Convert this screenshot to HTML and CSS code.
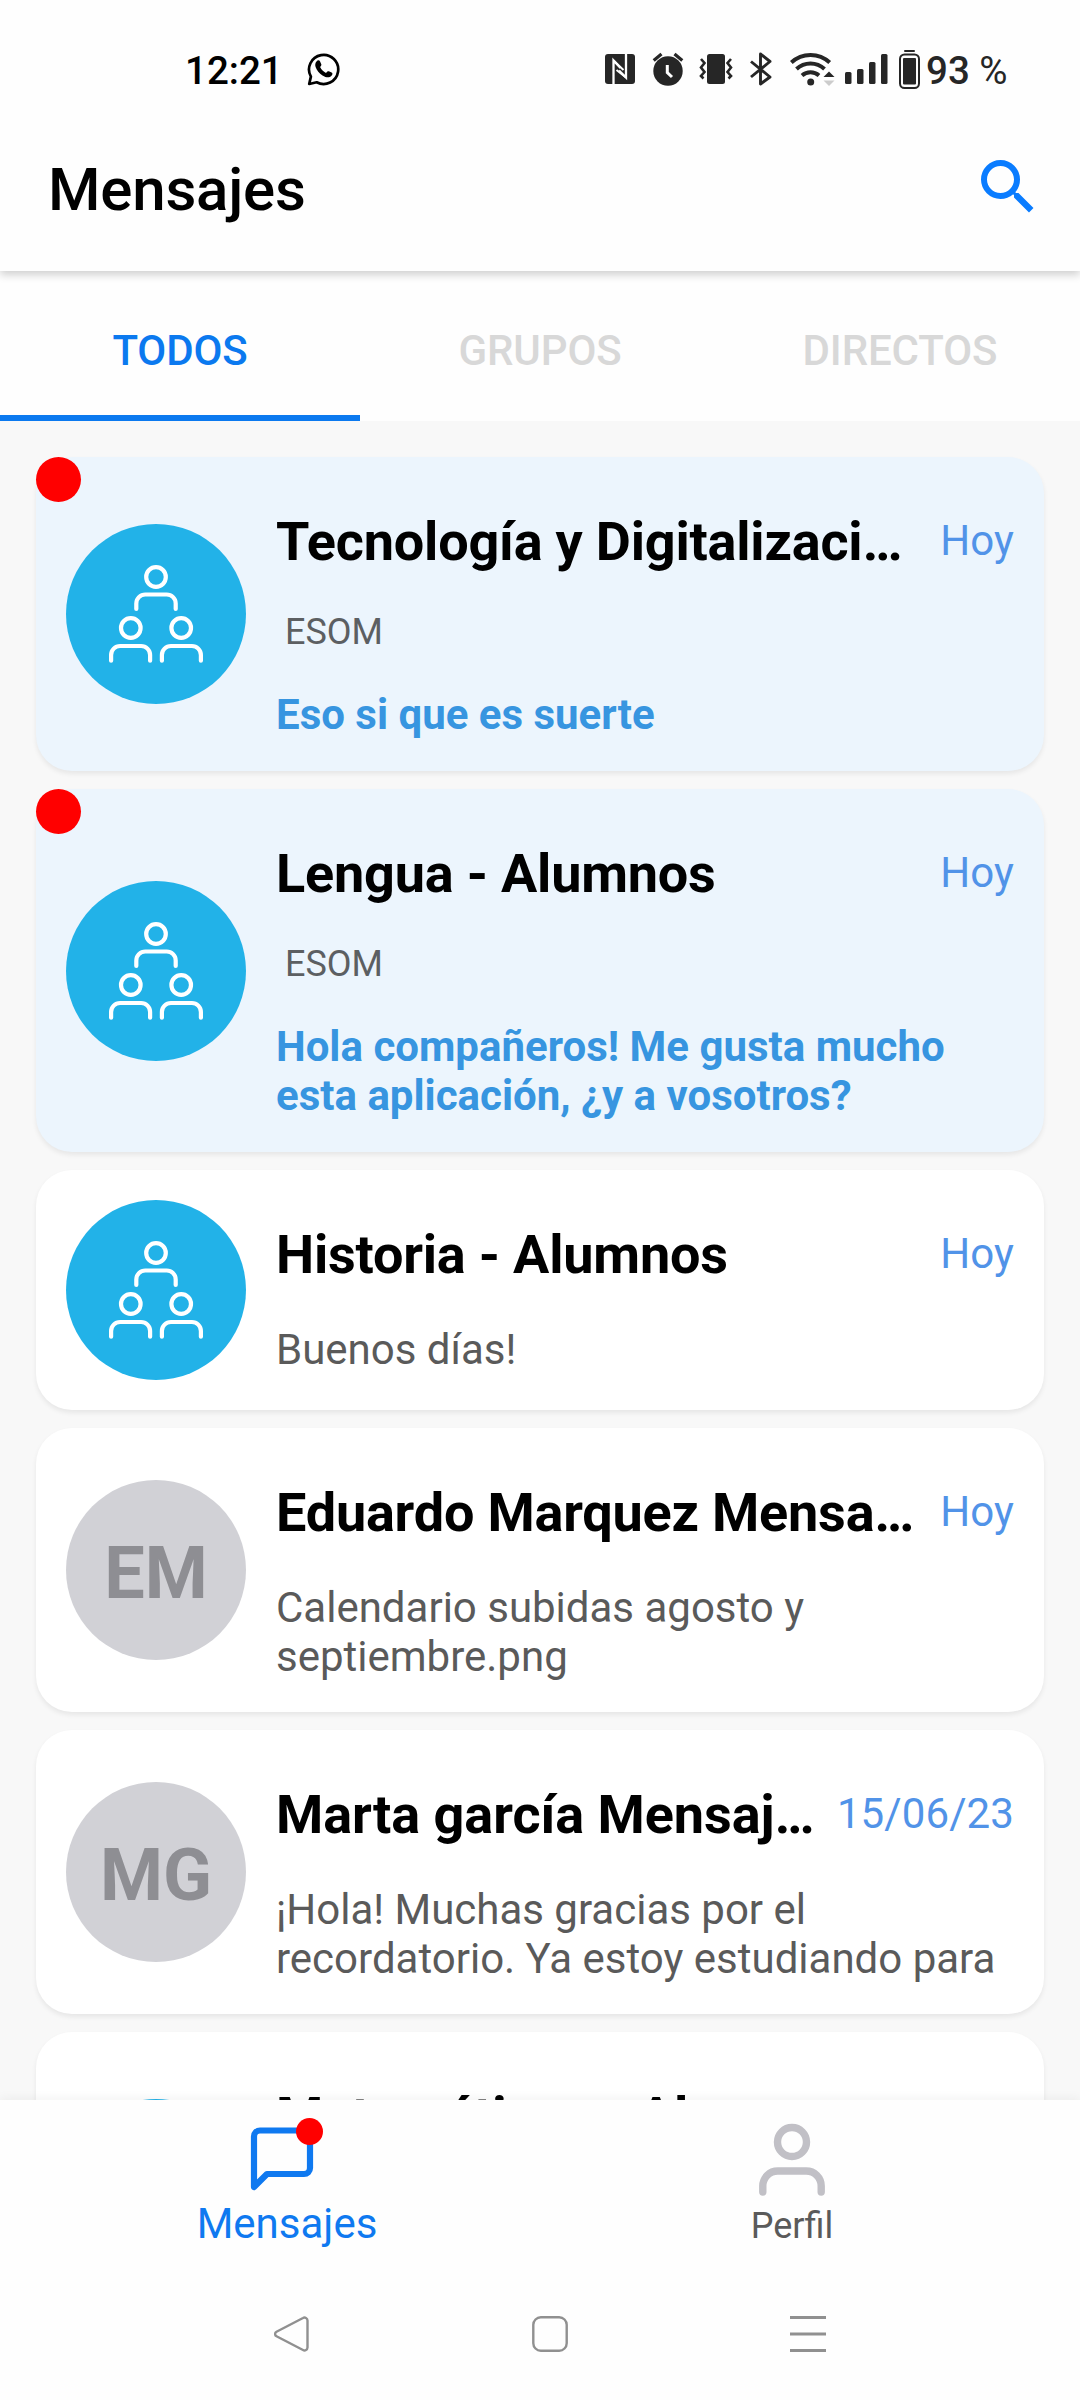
FILE: index.html
```html
<!DOCTYPE html>
<html lang="es">
<head>
<meta charset="utf-8">
<title>Mensajes</title>
<link rel="stylesheet" href="styles.css">
</head>
<body>
<svg class="defs" width="0" height="0" aria-hidden="true">
  <symbol id="group" viewBox="0 0 180 180">
    <g fill="none" stroke="#fff" stroke-width="4.2" stroke-linecap="round">
      <circle cx="90" cy="53" r="9.8"/>
      <path d="M70.300 85V79.500a9 9 0 0 1 9-9h21.400a9 9 0 0 1 9 9V85"/>
      <circle cx="64.800" cy="104" r="9.800"/>
      <path d="M45.100 136.700V131a9 9 0 0 1 9-9h21a9 9 0 0 1 9 9v5.700"/>
      <circle cx="115.200" cy="104" r="9.800"/>
      <path d="M95.900 136.700V131a9 9 0 0 1 9-9h21a9 9 0 0 1 9 9v5.700"/>
    </g>
  </symbol>
</svg>
<div class="screen">
  <div class="status">
    <span class="clock">12:21</span>
    <svg class="wa" width="34" height="34" viewBox="0 0 34 34"><path d="M2.200 32l1.700-7.400A14.600 14.600 0 1 1 9.700 30.300Z" fill="none" stroke="#000" stroke-width="2.700" stroke-linejoin="round"/><path d="M9.300 9.700c1.500-1.800 3-1.700 3.800-.2l1.200 2.700c.3 1-.2 1.700-1.200 2.900 1.400 2.900 3.200 4.600 5.900 5.800 1.300-1.700 1.900-2 2.900-1.600l2.700 1.300c1.200.6 1.100 2-.1 3.200-2.300 2.300-5.400 1.800-9-.4-3.300-2-5.700-4.900-6.800-8.100-.8-2.400-.5-4.300.6-5.600Z"/></svg>
    <svg class="nfc" width="30" height="30" viewBox="0 0 30 30"><rect width="30" height="30" rx="3" fill="#262626"/><path d="M8.500 30V6.500L15.500 14M21 0v23.500L14 16.500" fill="none" stroke="#fff" stroke-width="2.300"/><path d="M8.500 6.500l10 9.500M11.500 16l9.500 7.500" fill="none" stroke="#fff" stroke-width="2"/></svg>
    <svg class="alarm" width="32" height="34" viewBox="0 0 32 34"><circle cx="16" cy="19" r="14.700" fill="#262626"/><path d="M1.700 8.500L9.500 2M30.300 8.500L22.500 2" stroke="#262626" stroke-width="3.200"/><path d="M15.300 13v7.500l4.700 4.500" fill="none" stroke="#fff" stroke-width="3"/></svg>
    <svg class="vib" width="34" height="30" viewBox="0 0 34 30"><rect x="8" width="18" height="30" rx="2.500" fill="#262626"/><path d="M2 5l3.500 4L2 13.500 5.500 18 2 22l2.500 2.500M32 5l-3.500 4L32 13.500 28.500 18l3.500 4-2.500 2.500" fill="none" stroke="#262626" stroke-width="2.600"/></svg>
    <svg class="bt" width="22" height="34" viewBox="0 0 22 34"><path d="M1 9.500l19 15.500-9.500 7V2L20 9.500 1 25" fill="none" stroke="#262626" stroke-width="2.900" stroke-linejoin="round"/></svg>
    <svg class="wifi" width="45" height="36" viewBox="0 0 45 36"><g fill="none" stroke="#262626" stroke-width="4"><path d="M1.300 11.500a28 28 0 0 1 38.400 0"/><path d="M6.500 18a20.500 20.500 0 0 1 28 0"/><path d="M12 24.500a13 13 0 0 1 17 0"/></g><circle cx="20.700" cy="31" r="3.500" fill="#262626"/><path d="M33.500 26L39 20.500 44.500 26Z" fill="#262626"/><path d="M33.500 29.500L39 35l5.500-5.500Z" fill="#ccc"/></svg>
    <svg class="signal" width="43" height="30" viewBox="0 0 43 30" fill="#262626"><rect y="18" width="6.500" height="12" rx="1.500"/><rect x="12" y="15" width="6.500" height="15" rx="1.500"/><rect x="24" y="8" width="6.500" height="22" rx="1.500"/><rect x="36" width="6.500" height="30" rx="1.500"/></svg>
    <svg class="batt" width="21" height="39" viewBox="0 0 21 39"><rect x="5" width="11" height="2" rx="1" fill="#262626"/><rect x="1" y="4.500" width="19" height="33.500" rx="4.500" fill="none" stroke="#262626" stroke-width="2"/><rect x="4" y="8" width="13" height="26.500" rx="1" fill="#262626"/></svg>
    <span class="percent">93 <span class="sign">%</span></span>
  </div>
  <header class="header">
    <h1 class="heading">Mensajes</h1>
    <svg width="72" height="72" viewBox="0 0 24 24" fill="#0a7cff"><path d="M15.500 14h-.79l-.28-.27A6.471 6.471 0 0 0 16 9.500 6.500 6.500 0 1 0 9.500 16c1.610 0 3.090-.59 4.230-1.570l.27.280v.79l5 4.990L20.490 19l-4.990-5zm-6 0C7.010 14 5 11.990 5 9.500S7.010 5 9.500 5 14 7.010 14 9.500 11.990 14 9.500 14z"/></svg>
  </header>
  <nav class="tabs">
    <a class="tab active">TODOS</a>
    <a class="tab">GRUPOS</a>
    <a class="tab">DIRECTOS</a>
  </nav>
  <main class="list">
    <article class="card unread tall">
      <i class="dot"></i>
      <div class="avatar"><svg width="180" height="180"><use href="#group"/></svg></div>
      <div class="body">
        <div class="top"><h2 class="title">Tecnología y Digitalizaci…</h2><time class="date">Hoy</time></div>
        <p class="label">ESOM</p>
        <p class="text">Eso si que es suerte</p>
      </div>
    </article>
    <article class="card unread taller">
      <i class="dot"></i>
      <div class="avatar"><svg width="180" height="180"><use href="#group"/></svg></div>
      <div class="body">
        <div class="top"><h2 class="title">Lengua - Alumnos</h2><time class="date">Hoy</time></div>
        <p class="label">ESOM</p>
        <p class="text">Hola compañeros! Me gusta mucho<br>esta aplicación, ¿y a vosotros?</p>
      </div>
    </article>
    <article class="card">
      <div class="avatar"><svg width="180" height="180"><use href="#group"/></svg></div>
      <div class="body">
        <div class="top"><h2 class="title">Historia - Alumnos</h2><time class="date">Hoy</time></div>
        <p class="text">Buenos días!</p>
      </div>
    </article>
    <article class="card">
      <div class="avatar initials">EM</div>
      <div class="body">
        <div class="top"><h2 class="title">Eduardo Marquez Mensa…</h2><time class="date">Hoy</time></div>
        <p class="text">Calendario subidas agosto y<br>septiembre.png</p>
      </div>
    </article>
    <article class="card">
      <div class="avatar initials">MG</div>
      <div class="body">
        <div class="top"><h2 class="title wide">Marta garcía Mensaj…</h2><time class="date">15/06/23</time></div>
        <p class="text">¡Hola! Muchas gracias por el<br>recordatorio. Ya estoy estudiando para</p>
      </div>
    </article>
    <article class="card tall">
      <div class="avatar"><svg width="180" height="180"><use href="#group"/></svg></div>
      <div class="body">
        <div class="top"><h2 class="title">Matemáticas - Alu…</h2><time class="date">15/06/23</time></div>
      </div>
    </article>
  </main>
  <nav class="bottom">
    <a class="item current">
      <span class="icon"><svg width="80" height="80" viewBox="0 0 80 80"><path d="M12 67V16.500a6 6 0 0 1 6-6h44a6 6 0 0 1 6 6V48a6 6 0 0 1-6 6H25Z" fill="none" stroke="#0f79f0" stroke-width="6.200" stroke-linejoin="round"/></svg><i class="badge"></i></span>
      <span>Mensajes</span>
    </a>
    <a class="item">
      <span class="icon"><svg width="80" height="80" viewBox="0 0 80 80"><g fill="none" stroke="#c1c0c6" stroke-width="7.400" stroke-linecap="round"><circle cx="40" cy="22" r="14.500"/><path d="M10.800 72V66a15 15 0 0 1 15-15h28.400a15 15 0 0 1 15 15v6"/></g></svg></span>
      <span>Perfil</span>
    </a>
  </nav>
  <footer class="system">
    <svg width="36" height="36" viewBox="0 0 36 36"><path d="M2.500 15.700 29 2a3 3 0 0 1 4.500 2.500v27A3 3 0 0 1 29 34L2.500 20.300a2.600 2.600 0 0 1 0-4.600Z"/></svg>
    <svg width="36" height="36" viewBox="0 0 36 36"><rect x="1.300" y="1.300" width="33.400" height="33.400" rx="7.500"/></svg>
    <svg width="36" height="36" viewBox="0 0 36 36"><path stroke-width="3" d="M0 1.500h36M0 18h36M0 34.500h36"/></svg>
  </footer>
</div>
</body>
</html>
```
FILE: styles.css
```css
* { box-sizing: border-box; margin: 0; padding: 0; }
body { font-family: Roboto, sans-serif; background: #fff; }
svg { display: block; flex: none; }
.defs { position: absolute; }
.screen { width: 1080px; height: 2400px; display: flex; flex-direction: column; overflow: hidden; background: #fefefe; }

.status { height: 138px; padding: 0 0 0 185px; display: flex; align-items: center; flex: none; font-size: 38.5px; line-height: 46px; font-weight: 500; color: #000; background: #fefefe; position: relative; z-index: 2; }
.clock { width: 97px; padding-top: 3px; }
.wa { margin-left: 25px; }
.nfc { margin-left: 264px; }
.alarm { margin-left: 17px; }
.vib { margin-left: 15px; }
.bt { margin-left: 17px; }
.wifi { margin-left: 18px; }
.signal { margin-left: 10px; }
.batt { margin-left: 11px; }
.percent { margin-left: 6px; padding-top: 3px; color: #262626; white-space: nowrap; }
.sign { font-weight: 400; }

.header { height: 133px; padding: 0 36px 0 48px; display: flex; justify-content: space-between; flex: none; align-items: flex-start; position: relative; z-index: 1; background: #fefefe; box-shadow: 0 4px 8px rgba(0,0,0,.18); }
.heading { font-size: 60px; line-height: 70px; font-weight: 500; margin-top: 17px; letter-spacing: -.2px; }
.header svg { margin-top: 13px; }

.tabs { height: 150px; display: flex; flex: none; background: #fefefe; }
.tab { flex: 1; text-align: center; font-size: 42px; font-weight: 500; line-height: 49px; padding-top: 55px; letter-spacing: -.1px; color: #d8d8d8; }
.tab.active { color: #0b79ef; border-bottom: 6px solid #0b79ef; }

.list { flex: 1; min-height: 0; overflow: hidden; padding: 36px 36px 0; background: #f8f8f8; display: flex; flex-direction: column; gap: 18px; }
.card { position: relative; flex: none; display: flex; align-items: center; gap: 30px; padding: 0 30px; min-height: 240px; border-radius: 36px; background: #fff; box-shadow: 0 3px 5px rgba(0,0,0,.07); }
.tall { min-height: 314px; }
.taller { min-height: 363px; }
.unread { background: #ecf5fd; }
.dot { position: absolute; left: 0; top: 0; width: 45px; height: 45px; border-radius: 50%; background: #f00; }
.avatar { width: 180px; height: 180px; flex: none; border-radius: 50%; background: #22b2e8; }
.initials { display: flex; align-items: center; justify-content: center; padding-top: 6px; background: #d1d1d6; color: #8e8e93; font-size: 72px; font-weight: 700; }
.body { flex: 1; min-width: 0; align-self: flex-start; padding: 53px 0 31px; }
.top { display: flex; justify-content: space-between; gap: 16px; }
.title { font-size: 54px; line-height: 63px; font-weight: 700; letter-spacing: -.2px; white-space: nowrap; color: #000; }
.wide { letter-spacing: -.05px; }
.date { font-size: 42px; line-height: 49px; margin-top: 6px; letter-spacing: .1px; color: #5193e8; }
.label { font-size: 36px; line-height: 42px; margin: 38px 0 -2px; padding-left: 9px; color: #5c5f62; }
.text { font-size: 42px; line-height: 49px; margin-top: 39px; white-space: nowrap; color: #5a5a5a; }
.unread .text { font-weight: 700; color: #3795e0; }

.bottom { height: 165px; flex: none; display: flex; padding: 0 36px; position: relative; background: #fefefe; box-shadow: 0 -2px 10px rgba(0,0,0,.05); }
.item { flex: 1; display: flex; flex-direction: column; align-items: center; font-size: 36px; line-height: 42px; color: #5a5a5a; }
.icon { position: relative; margin-top: 20px; }
.item.current .icon { margin-left: -12px; }
.item span:last-child { margin-top: 5px; }
.current { font-size: 42px; line-height: 49px; color: #0f79f0; }
.item.current span:last-child { margin-top: -1px; margin-left: -2px; }
.badge { position: absolute; left: 54px; top: -2px; width: 27px; height: 27px; border-radius: 50%; background: #f00; }

.system { height: 135px; flex: none; position: relative; padding: 51px 254px 0 274px; display: flex; justify-content: space-between; background: #fefefe; }
.system svg { fill: none; stroke: #909090; stroke-width: 2.4; }
```
